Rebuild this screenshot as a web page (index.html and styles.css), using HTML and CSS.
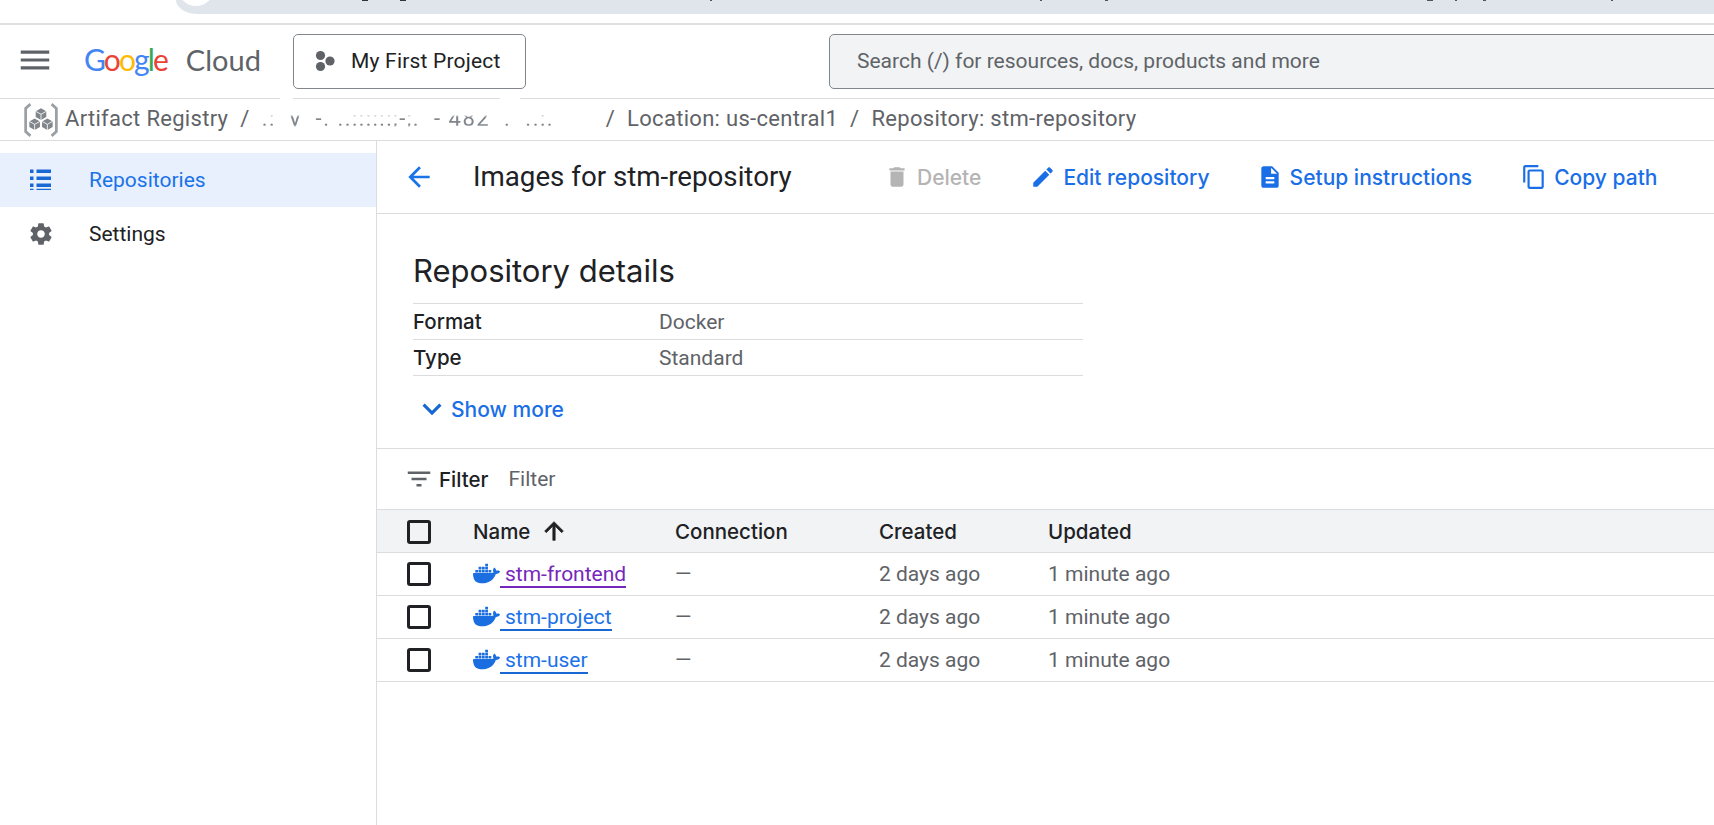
FILE: index.html
```html
<!DOCTYPE html>
<html lang="en">
<head>
<meta charset="utf-8">
<title>Images for stm-repository</title>
<link rel="stylesheet" href="styles.css">
</head>
<body>
<div class="strip"><div class="strip-bar"><span class="strip-dot"></span></div></div>

<header class="topbar">
  <svg class="menu-icon" viewBox="0 0 24 24"><path d="M3 18h18v-2H3v2zm0-5h18v-2H3v2zm0-7v2h18V6H3z"/></svg>
  <div class="logo"><span class="logo-google"><span class="g-b">G</span><span class="g-r">o</span><span class="g-y">o</span><span class="g-b">g</span><span class="g-g">l</span><span class="g-r">e</span></span><span class="logo-cloud">Cloud</span></div>
  <button class="project">
    <svg class="project-icon" viewBox="0 0 20 22"><circle cx="5.5" cy="5.5" r="4.6"/><circle cx="5.5" cy="16.5" r="4.6"/><circle cx="15" cy="11" r="4.6"/></svg>
    <span>My First Project</span>
  </button>
  <div class="search">Search (/) for resources, docs, products and more</div>
</header>

<nav class="crumbs">
  <svg class="ar-icon" viewBox="0 0 34 34">
    <path class="ar-bracket" d="M7 2 L2.5 6 V28 L7 32 M27 2 L31.500 6 V28 L27 32"/>
    <path class="ar-dark" d="M17 6l5 2.800v5.400l-5 2.800-5-2.800V8.800z"/>
    <path class="ar-dark" d="M11 15.500l5 2.800v5.400l-5 2.800-5-2.800v-5.400z"/>
    <path class="ar-dark" d="M23 15.500l5 2.800v5.400l-5 2.800-5-2.800v-5.400z"/>
    <path class="ar-line" d="M12 8.800l5 2.800 5-2.800M17 11.600v5.400M6 18.300l5 2.800 5-2.800M11 21.100v5.400M18 18.300l5 2.800 5-2.800M23 21.100v5.400"/>
  </svg>
  <span class="crumb">Artifact Registry</span>
  <span class="sep">/</span>
  <span class="crumb crumb-hidden">.:&nbsp;&nbsp;y&nbsp;&nbsp;-.&nbsp;..::::::;-;.&nbsp;&nbsp;-&nbsp;482&nbsp;&nbsp;.&nbsp;&nbsp;..:.</span>
  <span class="sep">/</span>
  <span class="crumb">Location: us-central1</span>
  <span class="sep">/</span>
  <span class="crumb">Repository: stm-repository</span>
</nav>

<div class="main">
  <aside class="sidebar">
    <a class="nav-item active">
      <svg class="nav-icon" viewBox="0 0 26 26"><path d="M2 2.500h3.500v3.500H2zM8.500 2.500H23v3.500H8.500zM2 9.500h3.500V13H2zM8.500 9.500H23V13H8.500zM2 16.500h3.500V20H2zM8.500 16.500H23V20H8.500zM2 23h3.500v-1.200H2zM8.500 23H23v-1.200H8.500z"/></svg>
      <span>Repositories</span>
    </a>
    <a class="nav-item">
      <svg class="nav-icon" viewBox="0 0 24 24"><path d="M19.430 12.980c.04-.32.07-.64.07-.98s-.03-.66-.07-.98l2.110-1.650c.19-.15.240-.42.120-.64l-2-3.460c-.12-.22-.39-.3-.61-.22l-2.490 1c-.52-.4-1.080-.73-1.690-.98l-.38-2.650C14.460 2.180 14.250 2 14 2h-4c-.25 0-.46.18-.49.42l-.38 2.650c-.61.25-1.170.59-1.690.98l-2.490-1c-.23-.09-.49 0-.61.22l-2 3.460c-.13.22-.07.49.12.64l2.110 1.650c-.04.32-.07.65-.07.98s.03.66.07.98l-2.110 1.650c-.19.15-.24.42-.12.64l2 3.460c.12.22.39.3.61.22l2.490-1c.52.4 1.080.73 1.690.98l.38 2.650c.03.24.24.42.49.42h4c.25 0 .46-.18.49-.42l.38-2.650c.61-.25 1.170-.59 1.690-.98l2.490 1c.23.09.49 0 .61-.22l2-3.460c.12-.22.07-.49-.12-.64l-2.110-1.650zM12 15.500c-1.930 0-3.500-1.570-3.500-3.500s1.570-3.500 3.500-3.500 3.500 1.570 3.500 3.500-1.570 3.500-3.500 3.500z"/></svg>
      <span>Settings</span>
    </a>
  </aside>

  <main class="content">
    <div class="titlebar">
      <svg class="back" viewBox="0 0 24 24"><path d="M20 11H7.830l5.590-5.590L12 4l-8 8 8 8 1.410-1.410L7.830 13H20v-2z"/></svg>
      <h1 class="page-title">Images for stm-repository</h1>
      <span class="action disabled action-delete">
        <svg viewBox="0 0 24 24"><path d="M6 19c0 1.100.9 2 2 2h8c1.100 0 2-.9 2-2V7H6v12zM19 4h-3.500l-1-1h-5l-1 1H5v2h14V4z"/></svg>Delete</span>
      <span class="action action-edit">
        <svg viewBox="0 0 24 24"><path d="M3 17.250V21h3.750L17.810 9.940l-3.750-3.750L3 17.250zM20.710 7.040c.39-.39.39-1.020 0-1.410l-2.340-2.340c-.39-.39-1.020-.39-1.410 0l-1.830 1.830 3.750 3.750 1.830-1.830z"/></svg>Edit repository</span>
      <span class="action action-setup">
        <svg viewBox="0 0 24 24"><path d="M14 2H6c-1.100 0-2 .9-2 2v16c0 1.100.9 2 2 2h12c1.100 0 2-.9 2-2V8l-6-6zm2 16H8v-2h8v2zm0-4H8v-2h8v2zm-3-5V3.500L18.500 9H13z"/></svg>Setup instructions</span>
      <span class="action action-copy">
        <svg viewBox="0 0 24 24"><path d="M16 1H4c-1.100 0-2 .9-2 2v14h2V3h12V1zm3 4H8c-1.100 0-2 .9-2 2v14c0 1.100.9 2 2 2h11c1.100 0 2-.9 2-2V7c0-1.100-.9-2-2-2zm0 16H8V7h11v14z"/></svg>Copy path</span>
    </div>

    <section class="details">
      <h2 class="details-title">Repository details</h2>
      <dl class="facts">
        <div class="fact"><dt>Format</dt><dd>Docker</dd></div>
        <div class="fact"><dt>Type</dt><dd>Standard</dd></div>
      </dl>
      <div class="show-more">
        <svg viewBox="0 0 24 24"><path d="M7.410 8.590 12 13.170l4.590-4.580L18 10l-6 6-6-6 1.410-1.410z"/></svg>Show more
      </div>
    </section>

    <div class="filter">
      <svg viewBox="0 0 24 24"><path d="M10 18h4v-2h-4v2zM3 6v2h18V6H3zm3 7h12v-2H6v2z"/></svg>
      <strong>Filter</strong>
      <span class="filter-input">Filter</span>
    </div>

    <div class="table">
      <div class="row head">
        <span class="cell-check"><span class="check"></span></span>
        <span class="cell-name">Name
          <svg class="sort" viewBox="0 0 24 24"><path d="M4 12l1.410 1.410L11 7.830V20h2V7.830l5.580 5.590L20 12l-8-8-8 8z"/></svg></span>
        <span class="cell-conn">Connection</span>
        <span class="cell-created">Created</span>
        <span class="cell-updated">Updated</span>
      </div>
      <div class="row">
        <span class="cell-check"><span class="check"></span></span>
        <span class="cell-name"><svg class="docker" viewBox="0 0 24 24"><use href="#whale"/></svg><a class="repo visited">stm-frontend</a></span>
        <span class="cell-conn">—</span>
        <span class="cell-created">2 days ago</span>
        <span class="cell-updated">1 minute ago</span>
      </div>
      <div class="row">
        <span class="cell-check"><span class="check"></span></span>
        <span class="cell-name"><svg class="docker" viewBox="0 0 24 24"><use href="#whale"/></svg><a class="repo">stm-project</a></span>
        <span class="cell-conn">—</span>
        <span class="cell-created">2 days ago</span>
        <span class="cell-updated">1 minute ago</span>
      </div>
      <div class="row">
        <span class="cell-check"><span class="check"></span></span>
        <span class="cell-name"><svg class="docker" viewBox="0 0 24 24"><use href="#whale"/></svg><a class="repo">stm-user</a></span>
        <span class="cell-conn">—</span>
        <span class="cell-created">2 days ago</span>
        <span class="cell-updated">1 minute ago</span>
      </div>
    </div>
  </main>
</div>

<svg class="defs" width="0" height="0"><defs>
  <path id="whale" d="M13.983 11.078h2.119a.186.186 0 00.186-.185V9.006a.186.186 0 00-.186-.186h-2.119a.185.185 0 00-.185.185v1.888c0 .102.083.185.185.185m-2.954-5.43h2.118a.186.186 0 00.186-.186V3.574a.186.186 0 00-.186-.185h-2.118a.185.185 0 00-.185.185v1.888c0 .102.082.185.185.186m0 2.716h2.118a.187.187 0 00.186-.186V6.29a.186.186 0 00-.186-.185h-2.118a.185.185 0 00-.185.185v1.887c0 .102.082.185.185.186m-2.93 0h2.12a.186.186 0 00.184-.186V6.29a.185.185 0 00-.185-.185H8.1a.185.185 0 00-.185.185v1.887c0 .102.083.185.185.186m-2.964 0h2.119a.186.186 0 00.185-.186V6.29a.185.185 0 00-.185-.185H5.136a.186.186 0 00-.186.185v1.887c0 .102.084.185.186.186m5.893 2.715h2.118a.186.186 0 00.186-.185V9.006a.186.186 0 00-.186-.186h-2.118a.185.185 0 00-.185.185v1.888c0 .102.082.185.185.185m-2.93 0h2.12a.185.185 0 00.184-.185V9.006a.185.185 0 00-.184-.186h-2.12a.185.185 0 00-.184.185v1.888c0 .102.083.185.185.185m-2.964 0h2.119a.185.185 0 00.185-.185V9.006a.185.185 0 00-.184-.186h-2.12a.186.186 0 00-.186.186v1.887c0 .102.084.185.186.185m-2.92 0h2.12a.185.185 0 00.184-.185V9.006a.185.185 0 00-.184-.186h-2.12a.185.185 0 00-.185.185v1.888c0 .102.083.185.185.185M23.763 9.89c-.065-.051-.672-.51-1.954-.51-.338.001-.676.03-1.01.087-.248-1.7-1.653-2.53-1.716-2.566l-.344-.199-.226.327c-.284.438-.49.922-.612 1.43-.23.97-.09 1.882.403 2.661-.595.332-1.55.413-1.744.42H.751a.751.751 0 00-.75.748 11.376 11.376 0 00.692 4.062c.545 1.428 1.355 2.48 2.41 3.124 1.18.723 3.1 1.137 5.275 1.137.983.003 1.963-.086 2.93-.266a12.248 12.248 0 003.823-1.389c.98-.567 1.86-1.288 2.61-2.136 1.252-1.418 1.998-2.997 2.553-4.4h.221c1.372 0 2.215-.549 2.68-1.009.309-.293.55-.65.707-1.046l.098-.288Z"/>
</defs></svg>
</body>
</html>
```

FILE: styles.css
```css
* { box-sizing: border-box; }
html, body { margin: 0; height: 100%; overflow: hidden; background: #fff; }
body { font-family: Roboto, "Liberation Sans", sans-serif; font-size: 21px; color: #202124; width: 1714px; }

.strip { height: 25px; border-bottom: 2px solid #e0e0e0; }
.strip-bar {
  height: 14px; margin-left: 176px; border-bottom-left-radius: 22px 14px; position: relative; overflow: hidden;
  background-color: #e0e5ec;
  background-repeat: no-repeat;
  background-size: 6px 1px, 6px 1px, 2px 1px, 2px 1px, 3px 1px, 6px 1px, 2px 1px, 3px 1px, 2px 1px;
  background-position: 186px 0, 224px 0, 534px 0, 864px 0, 929px 0, 1251px 0, 1279px 0, 1307px 0, 1435px 0;
  background-image: linear-gradient(#333, #333), linear-gradient(#333, #333), linear-gradient(#555, #555), linear-gradient(#555, #555), linear-gradient(#555, #555), linear-gradient(#555, #555), linear-gradient(#555, #555), linear-gradient(#555, #555), linear-gradient(#555, #555);
}
.strip-dot { position: absolute; left: 2px; top: -30px; width: 36px; height: 36px; border-radius: 50%; background: #fff; }

.topbar { height: 74px; border-bottom: 1px solid #dadce0; display: flex; align-items: center; padding-left: 16px; }
.menu-icon { width: 38px; height: 38px; fill: #5f6368; flex: none; margin-bottom: 3px; }
.logo { width: 210px; margin-left: 30px; margin-bottom: 4px; font-family: Lato, sans-serif; font-size: 29px; line-height: 40px; flex: none; white-space: nowrap; }
.logo-google { letter-spacing: -1.9px; font-size: 30px; }
.logo-cloud { color: #5f6368; margin-left: 19px; }
.g-b { color: #4285f4; } .g-r { color: #ea4335; } .g-y { color: #fbbc04; } .g-g { color: #34a853; }
.project { width: 233px; height: 55px; margin-left: -1px; border: 1px solid #80868b; border-radius: 5px; background: #fff; display: flex; align-items: center; padding: 0 0 2px 21px; font: inherit; letter-spacing: .2px; color: #202124; flex: none; gap: 16px; }
.project-icon { width: 20px; height: 22px; fill: #5f6368; flex: none; }
.search { height: 55px; flex: 1; margin-left: 303px; margin-right: -8px; background: #f1f3f4; border: 1px solid #80868b; border-radius: 5px; display: flex; align-items: center; padding: 0 0 2px 27px; color: #5f6368; }

.crumbs { height: 42px; padding: 0 0 2px 23px; border-bottom: 1px solid #dadce0; display: flex; align-items: center; color: #5f6368; white-space: nowrap; position: relative; font-size: 22px; letter-spacing: .3px; }
.crumbs::before, .crumbs::after { content: ""; position: absolute; top: -1px; height: 1px; background: #fff; }
.crumbs::before { left: 280px; width: 13px; }
.crumbs::after { left: 500px; width: 20px; }
.ar-icon { width: 36px; height: 36px; flex: none; margin-right: 6px; margin-top: 2px; }
.ar-bracket { fill: none; stroke: #9aa0a6; stroke-width: 2.6; }
.ar-dark { fill: #80868b; }
.ar-line { fill: none; stroke: #fff; stroke-width: .8; }
.sep { margin: 0 12px; }
.crumb-hidden {
  width: 332px; color: #80868b; overflow: hidden; letter-spacing: 1.5px;
  -webkit-mask-image: linear-gradient(transparent 35%, #000 45%, #000 75%, transparent 85%);
  mask-image: linear-gradient(transparent 35%, #000 45%, #000 75%, transparent 85%);
}

.main { display: flex; height: 684px; }
.sidebar { width: 377px; flex: none; border-right: 1px solid #dadce0; padding-top: 12px; }
.nav-item { display: flex; align-items: center; height: 54px; padding-left: 28px; gap: 35px; color: #202124; }
.nav-item.active { background: #e8f0fe; color: #1a73e8; }
.nav-icon { width: 26px; height: 26px; fill: #5f6368; flex: none; }
.active .nav-icon { fill: #1967d2; }

.content { flex: 1; min-width: 0; }
.titlebar { height: 73px; border-bottom: 1px solid #dadce0; display: flex; align-items: center; padding-left: 26px; color: #1a73e8; }
.back { width: 32px; height: 32px; fill: #1a73e8; flex: none; }
.page-title { margin: 0 0 2px 38px; width: 411px; font-size: 27.7px; font-weight: 400; color: #202124; white-space: nowrap; }
.action { display: flex; align-items: center; gap: 7px; font-family: Inter, sans-serif; font-size: 21px; font-weight: 500; color: #1a6ee6; }
.action svg { width: 26px; height: 26px; fill: currentColor; flex: none; }
.action.disabled { color: #b4b4b4; }
.action-edit { margin-left: 49px; }
.action-setup { margin-left: 47px; }
.action-copy { margin-left: 49px; }

.details { height: 234px; padding: 36px 0 0 36px; }
.details-title { margin: 0; height: 53px; font-family: Inter, sans-serif; font-size: 31px; line-height: 42px; font-weight: 400; white-space: nowrap; }
.facts { margin: 0; width: 670px; border-top: 1px solid #dadce0; }
.fact { display: flex; height: 36px; align-items: center; border-bottom: 1px solid #dadce0; }
.fact dt { width: 246px; font-family: Inter, sans-serif; font-size: 20.5px; font-weight: 500; }
.fact dd { margin: 0; color: #5f6368; }
.show-more { display: flex; align-items: center; gap: 3px; margin: 15px 0 0 0; height: 36px; color: #1a6ee6; font-family: Inter, sans-serif; font-size: 21px; font-weight: 500; }
.show-more svg { width: 38px; height: 38px; fill: #1967d2; margin-right: -3px; flex: none; }

.filter { height: 61px; border-top: 1px solid #dadce0; display: flex; align-items: center; padding-left: 27px; }
.filter svg { width: 30px; height: 30px; fill: #5f6368; flex: none; }
.filter strong { font-family: Inter, sans-serif; font-size: 20.5px; font-weight: 500; margin-left: 5px; }
.filter-input { margin-left: 20px; color: #5f6368; }

.row { height: 43px; display: flex; align-items: center; border-bottom: 1px solid #dadce0; color: #5f6368; }
.row.head { height: 44px; background: #f1f3f4; border-top: 1px solid #dadce0; color: #202124; font-family: Inter, sans-serif; font-size: 20.5px; font-weight: 500; }
.head .check { margin-top: 2px; }
.cell-check { width: 96px; flex: none; padding-left: 30px; display: flex; }
.check { width: 24px; height: 24px; border: 3px solid #202124; border-radius: 3px; }
.cell-name { width: 202px; flex: none; display: flex; align-items: center; }
.cell-conn { width: 204px; flex: none; }
.cell-created { width: 169px; flex: none; }
.sort { width: 28px; height: 28px; fill: #202124; stroke: #202124; stroke-width: .6; margin-left: 10px; }
.docker { width: 27px; height: 27px; fill: #1a6ee0; flex: none; margin-top: -2px; }
.repo { color: #1a73e8; border-bottom: 2px solid #1967d2; padding-left: 5px; line-height: 24px; margin-top: 2px; }
.repo.visited { color: #7627bb; border-bottom-color: #7627bb; }
.defs { position: absolute; }
```
